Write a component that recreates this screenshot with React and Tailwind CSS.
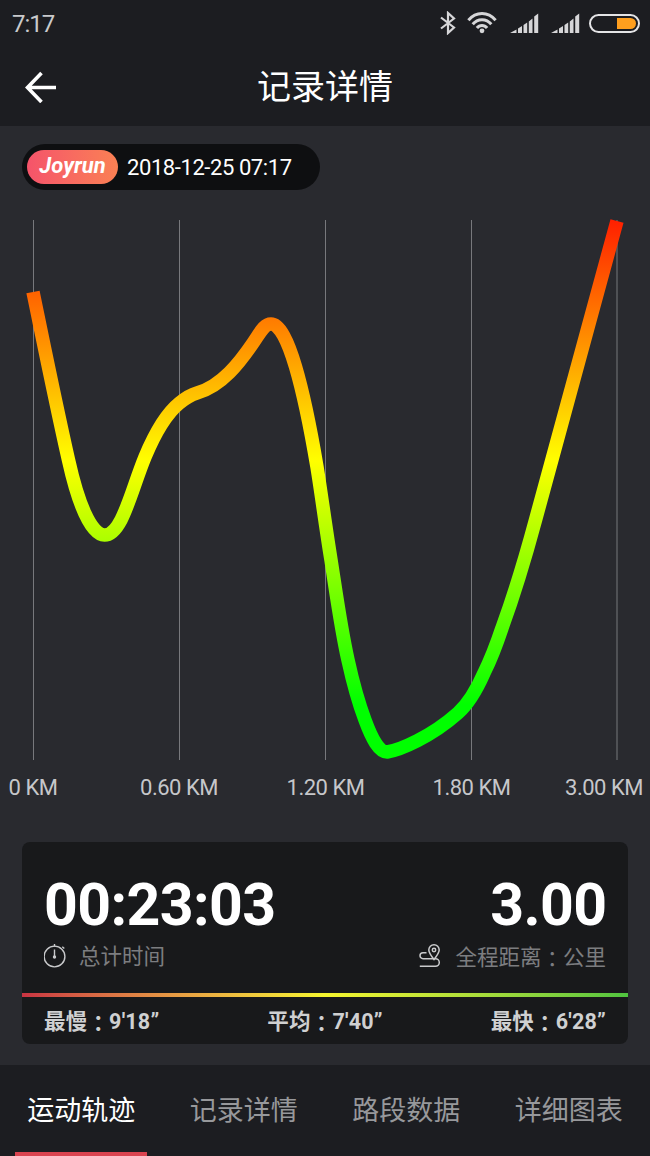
const TICKS = [
  { label: '0 KM', x: 33, labelX: 33 },
  { label: '0.60 KM', x: 179, labelX: 179 },
  { label: '1.20 KM', x: 325, labelX: 325.5 },
  { label: '1.80 KM', x: 471, labelX: 471.5 },
  { label: '3.00 KM', x: 616.5, labelX: 604 },
]

const TABS = ['运动轨迹', '记录详情', '路段数据', '详细图表']

const PACES = [
  { name: '最慢', value: '9\'18”' },
  { name: '平均', value: '7\'40”' },
  { name: '最快', value: '6\'28”' },
]

const PACE_PATH =
  'M33 292 C45 350 55 400 68.5 460 C78 503 91 535 104.5 535 C122 535 131 491 145 457 ' +
  'C155 433 167 413 179.5 403 C185 398.5 190 395 197 393 C222 386 240 362 253 343 ' +
  'C260 333 264 324 271 324 C288 324 304 390 317 467 ' +
  'C321.5 495 325.5 526 331 560 C336 592 341 629 348 660 C353 683 359 704 365 720 ' +
  'C372 739 379 752 387 752 C400 750 431 737 458 713 C468 704 477 689 484 673 ' +
  'C491 659 497 643 502 628 C510 606 525 559 535.5 520 L617 221'

function Colon() {
  return <span className="relative top-[2px] font-['Noto_Sans_CJK_TC',sans-serif]" lang="zh-TW">：</span>
}

function Signal() {
  return (
    <svg className="h-5 w-[29px]" viewBox="0 0 29 20" fill="#d6d6d8">
      <path d="M0 20 6.5 16.6V20ZM8 15.5 12 13V20H8ZM13.5 12 17.2 9.5V20H13.5ZM18.8 8.4 22.5 5.5V20H18.8ZM24.2 3.5 28.2.5V20H24.2Z" />
    </svg>
  )
}

function StatusBar() {
  return (
    <div className="flex h-[46px] items-center pl-3 pr-[10px] text-[#c9cacc]">
      <span className="pt-[2px] text-[24px] leading-[46px] tracking-[-1px]">7:17</span>
      <svg className="ml-auto h-6 w-4" viewBox="0 0 16 24" fill="none" stroke="#d6d6d8" strokeWidth="2.2">
        <path d="m1 6.5 13 10-6 5.5V2l6 5.5-13 10" />
      </svg>
      <svg className="ml-[11px] h-[22px] w-[30px]" viewBox="0 0 30 22" fill="none" stroke="#d6d6d8" strokeWidth="3">
        <path d="M1.4 8.2C9-.7 21-.7 28.6 8.2M5.7 12.3c5-6.2 13.6-6.2 18.6 0M9.9 16c2.7-3.5 7.5-3.5 10.2 0" />
        <circle cx="15" cy="18.8" r="2.4" fill="#d6d6d8" stroke="none" />
      </svg>
      <div className="ml-[13px] flex gap-3">
        <Signal />
        <Signal />
      </div>
      <div className="ml-[9px] flex h-[19px] w-[51px] justify-end rounded-full border-2 border-[#e4e4e6] p-[2px]">
        <div className="w-[19px] rounded-r-full bg-[#ff9f1e]" />
      </div>
    </div>
  )
}

function PaceChart() {
  return (
    <svg className="block h-[610px] w-[650px]" viewBox="0 200 650 610">
      <defs>
        <linearGradient id="pace" gradientUnits="userSpaceOnUse" x1="0" y1="197" x2="0" y2="705">
          <stop offset="0" stopColor="#ff0a00" />
          <stop offset="0.52" stopColor="#ffff00" />
          <stop offset="1" stopColor="#00ff00" />
        </linearGradient>
      </defs>
      {TICKS.map((tick) => (
        <g key={tick.label}>
          <rect x={tick.x} y="220" width="1" height="540" fill="#77787c" />
          <text x={tick.labelX} y="795" textAnchor="middle" fontSize="22" letterSpacing="-0.5" fill="#c6c7ca">{tick.label}</text>
        </g>
      ))}
      <path d={PACE_PATH} fill="none" stroke="url(#pace)" strokeWidth="13.5" />
    </svg>
  )
}

function Summary() {
  return (
    <section className="mx-[22px] mt-8 h-[202px] rounded-lg bg-[#18191b]">
      <div className="flex h-[151px] justify-between px-[22px] pt-[32px]">
        <div>
          <p className="text-[59px] font-bold leading-[62px] tracking-[-0.6px] text-white">00:23:03</p>
          <div className="mt-1 flex h-8 items-center text-[21.5px] text-[#7c7d80]">
            <svg className="mr-[12px] h-6 w-[23px]" viewBox="0 0 23 24" fill="none" stroke="#c9cacc" strokeWidth="1.4">
              <circle cx="10.5" cy="12.5" r="10.4" />
              <path d="M10.500 0v2.500M10.500 5.500v7.500M18.300 2.800l2 1.700" />
              <circle cx="10.5" cy="13" r="1" fill="#c9cacc" />
            </svg>
            <span className="pt-[3px]">总计时间</span>
          </div>
        </div>
        <div className="flex flex-col items-end">
          <p className="-mr-[0.6px] text-[59px] font-bold leading-[62px] tracking-[-0.6px] text-white">3.00</p>
          <div className="mt-1 flex h-8 items-center text-[21.5px] text-[#7c7d80]">
            <svg className="mr-[14px] h-6 w-[22px]" viewBox="0 0 22 24" fill="none" stroke="#c9cacc" strokeWidth="1.5">
              <path d="M15 15.500C11.500 11 9.800 8.500 9.800 6a5.200 5.200 0 0 1 10.400 0c0 2.500-1.700 5-5.200 9.500Z" />
              <circle cx="15" cy="6" r="1.7" />
              <path d="M7.500 8.700H4a3 3 0 0 0 0 6h12.500a3.800 3.800 0 0 1 0 7.600H.8" />
            </svg>
            <span className="pt-[2px]">全程距离<Colon />公里</span>
          </div>
        </div>
      </div>
      <div className="h-1 bg-linear-to-r from-[#c93342] via-[#f5f52e] to-[#4fc43f]" />
      <div className="flex h-[47px] items-center justify-between px-[22px] pt-px text-[21.5px] font-bold tracking-[0.2px] text-[#cfd0d1]">
        {PACES.map((pace) => (
          <span key={pace.name}>{pace.name}<Colon />{pace.value}</span>
        ))}
      </div>
    </section>
  )
}

export default function App() {
  return (
    <div className="flex h-[1156px] w-[650px] flex-col overflow-hidden bg-[#292a2f] font-[Roboto,'Noto_Sans_CJK_SC',sans-serif]" lang="zh-CN">
      <header className="h-[126px] bg-[#1c1d21]">
        <StatusBar />
        <div className="grid h-20 grid-cols-[1fr_auto_1fr] items-center text-white">
          <svg className="ml-[25px] h-8 w-8" viewBox="0 0 32 32" fill="none" stroke="currentColor" strokeWidth="3.6">
            <path d="M31 16.500H3M16.500 2 2.500 16.500l14 14.500" />
          </svg>
          <h1 className="pt-px text-[34px] leading-[80px]">记录详情</h1>
        </div>
      </header>

      <div className="ml-[22px] mt-[18px] flex h-[46px] w-[298px] shrink-0 items-center rounded-full bg-[#0e0f11] pl-[5px]">
        <span className="flex h-[34px] w-[91px] items-center justify-center rounded-full bg-linear-to-r from-[#f5536a] to-[#fa8053] pb-[3px] text-[22px] font-bold italic text-white">
          Joyrun
        </span>
        <span className="ml-[9px] pt-px text-[22px] tracking-[-0.42px] text-white">2018-12-25 07:17</span>
      </div>

      <div className="mt-[10px] shrink-0">
        <PaceChart />
      </div>
      <Summary />

      <nav className="mt-[21px] grid h-[92px] shrink-0 grid-cols-4 bg-[#1c1d21] text-[27px]">
        {TABS.map((tab, index) => (
          <div key={tab} className={index === 0 ? 'flex flex-col items-center text-white' : 'flex flex-col items-center text-[#97989b]'}>
            <span className="h-[87px] leading-[92px]">{tab}</span>
            {index === 0 && <span className="h-1 w-[132px] bg-[#da4450]" />}
          </div>
        ))}
      </nav>
    </div>
  )
}
